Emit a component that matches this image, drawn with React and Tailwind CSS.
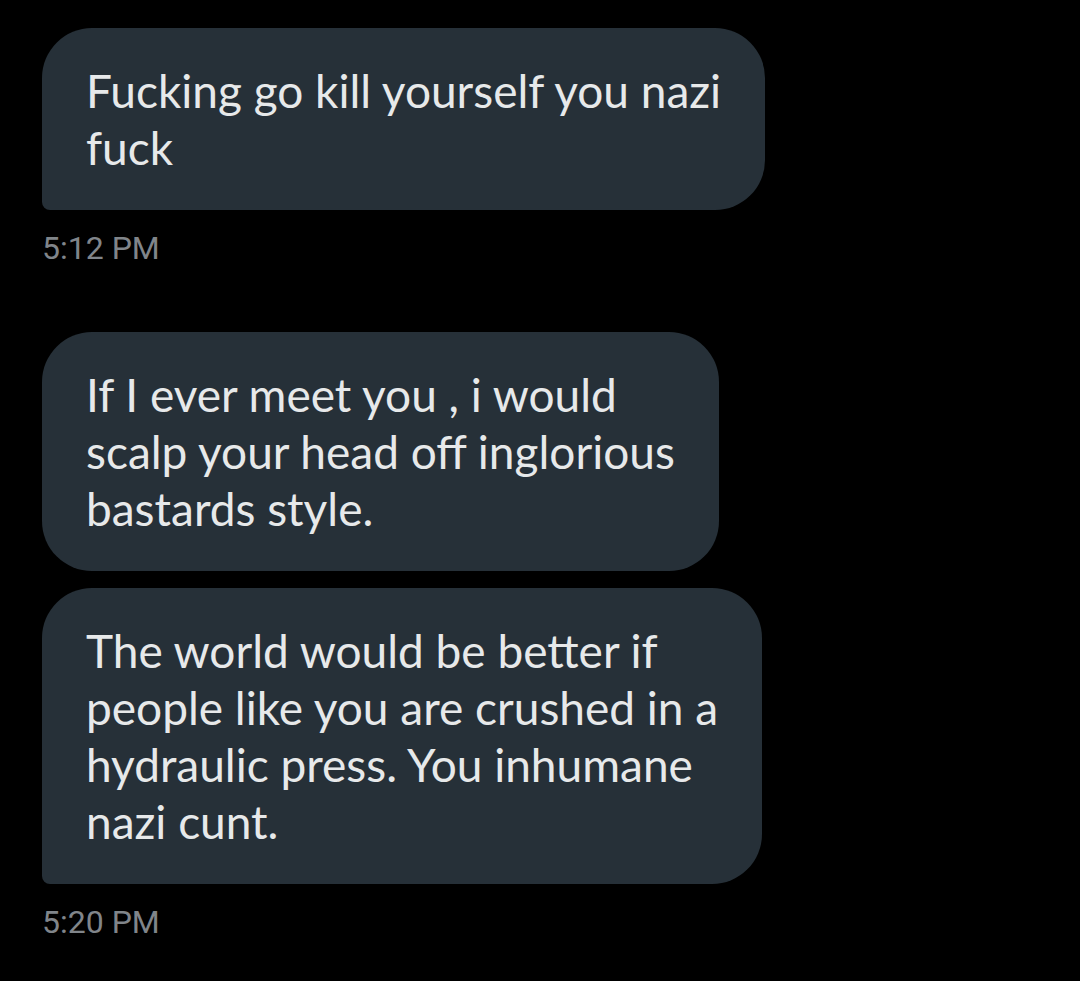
import React from 'react';

const groups = [
  {
    time: '5:12 PM',
    messages: [['Fucking go kill yourself you nazi', 'fuck']],
  },
  {
    time: '5:20 PM',
    messages: [
      ['If I ever meet you , i would', 'scalp your head off inglorious', 'bastards style.'],
      ['The world would be better if', 'people like you are crushed in a', 'hydraulic press. You inhumane', 'nazi cunt.'],
    ],
  },
];

// --- Single received bubble ---
function Bubble({ lines, last }) {
  return (
    <div
      className={`w-fit bg-[#263038] text-[#e7e9ea] px-[44px] py-[34px] rounded-[50px] ${last ? 'rounded-bl-[8px]' : ''}`}
      style={{ fontFamily: 'Lato, "Noto Sans", sans-serif' }}
    >
      {lines.map((l, i) => (
        <div key={i} className="text-[46px] leading-[57px] whitespace-nowrap">{l}</div>
      ))}
    </div>
  );
}

export default function App() {
  return (
    <div className="min-h-[981px] w-[1080px] bg-black pt-[28px] pl-[42px]">
      {groups.map((g, gi) => (
        <div key={gi} className={gi > 0 ? 'mt-[66px]' : ''}>
          <div className="flex flex-col gap-[17px]">
            {g.messages.map((m, mi) => (
              <Bubble key={mi} lines={m} last={mi === g.messages.length - 1} />
            ))}
          </div>
          <div
            className="mt-[20px] text-[32px] leading-[36px] text-[#80858a]"
            style={{ fontFamily: 'Roboto, "Liberation Sans", sans-serif' }}
          >
            {g.time}
          </div>
        </div>
      ))}
    </div>
  );
}
